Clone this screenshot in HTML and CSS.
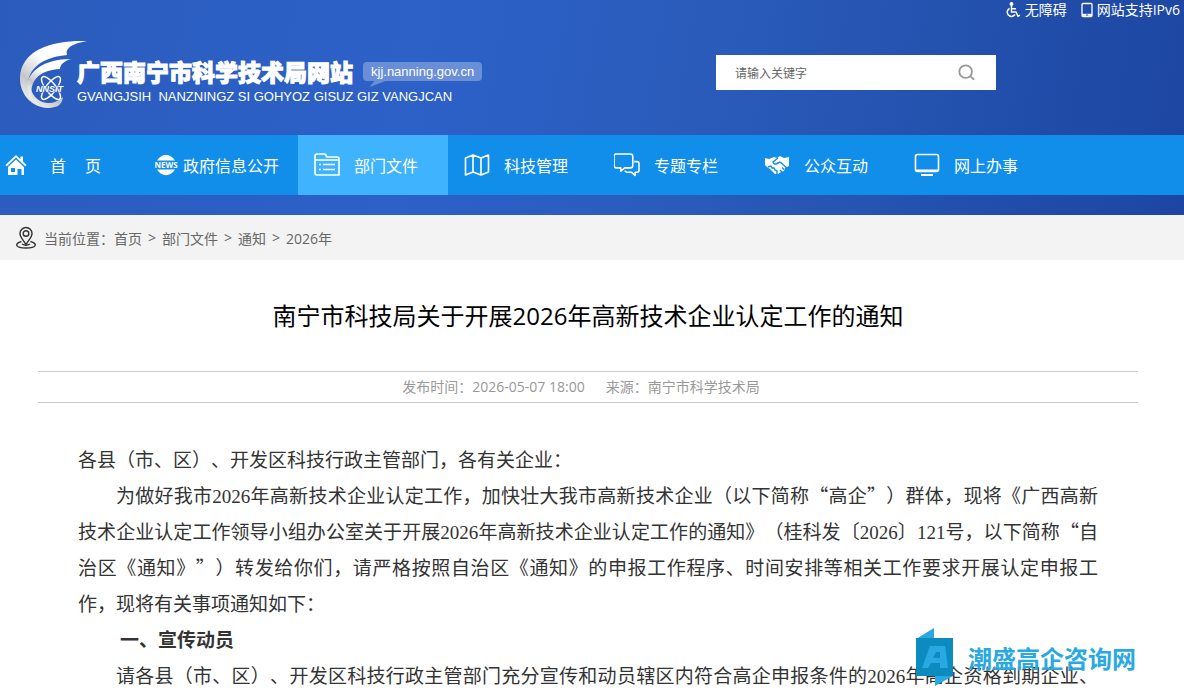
FILE: index.html
```html
<!DOCTYPE html>
<html lang="zh-CN">
<head>
  <meta charset="UTF-8" />
  <meta name="viewport" content="width=device-width, initial-scale=1.0"/>
  <title>南宁市科技局关于开展2026年高新技术企业认定工作的通知</title>
  <link rel="stylesheet" href="styles.css">
</head>
<body>
  <header class="header">
    <div class="topbar">
      <a href="#">
        <svg width="16" height="16" viewBox="0 0 16 16" fill="none" stroke="#fff" stroke-width="1.5">
          <circle cx="6.5" cy="2" r="1.2" fill="#fff"/>
          <path d="M6.5 4v6h4.500l2 4.200 2-1M7 6.700h4M4.500 6.500a4.200 4.200 0 1 0 5.500 6"/>
        </svg>
        <span>无障碍</span>
      </a>
      <a href="#">
        <svg width="12" height="16" viewBox="0 0 12 16" fill="none" stroke="#fff">
          <rect x="1" y="1.500" width="10" height="13" rx="1" stroke-width="1.300"/>
          <path d="M1 12.800h10" stroke-width="2"/>
          <path d="M5 13h2" stroke="#2250ae"/>
        </svg>
        <span>网站支持IPv6</span>
      </a>
    </div>

    <div class="banner">
      <a href="#" class="logo">
        <svg class="logo-mark" width="70" height="70" viewBox="0 0 70 70">
          <defs>
            <linearGradient id="silver" x1="0.7" y1="0.2" x2="0.2" y2="0.9">
              <stop offset="0.3" stop-color="#fff"/>
              <stop offset="0.75" stop-color="#c4c6ca"/>
              <stop offset="1" stop-color="#e9e9e9"/>
            </linearGradient>
          </defs>
          <path fill="url(#silver)" d="M68 1C34 0 2 9 1 38c0 17 12 29 27 30 8 0 13-2 15-7l1-4c-5 4-9 6-14 6-9 0-16-6-18-14l-3-1c-1-16 9-30 39-33-1-3 0-5 1-6 3-4 9-6 19-8z"/>
          <path fill="url(#silver)" d="M52 19C24 19 9 32 8 46l2 10 3 2C10 42 19 30 41 29c0-4 4-8 11-10z"/>
          <g fill="none" stroke="#fff" stroke-width="1.500">
            <ellipse cx="32" cy="48" rx="5" ry="14" transform="rotate(38 32 48)"/>
            <ellipse cx="32" cy="48" rx="5" ry="14" transform="rotate(-38 32 48)"/>
          </g>
          <text x="17" y="52" class="logo-code">NNSIT</text>
        </svg>
        <span class="logo-text">
          <span class="logo-row">
            <strong>广西南宁市科学技术局网站</strong>
            <span class="domain">kjj.nanning.gov.cn</span>
          </span>
          <span class="pinyin">GVANGJSIH&nbsp; NANZNINGZ SI GOHYOZ GISUZ GIZ VANGJCAN</span>
        </span>
      </a>

      <form class="search">
        <input type="text" placeholder="请输入关键字" aria-label="请输入关键字">
        <button type="button" aria-label="搜索">
          <svg width="18" height="18" viewBox="0 0 20 20" fill="none" stroke="#999" stroke-width="2">
            <circle cx="8.500" cy="8.500" r="7"/>
            <path d="M13.500 13.500l4.500 4"/>
          </svg>
        </button>
      </form>
    </div>

    <nav class="nav">
      <a href="#" class="home">
        <svg width="22" height="22" viewBox="0 0 22 22" fill="#fff">
          <path d="M11 1L0.500 11l1.300 1.200L11 3.600l9.200 8.600 1.300-1.200-3.500-3.400V2.500h-2.500v2.700z"/>
          <path d="M11 5.500L3 13v8h9.500v-6h4v6H19v-8zM6 14h4v4H6z" fill-rule="evenodd"/>
        </svg>
        <span>首</span><span>页</span>
      </a>
      <a href="#" class="news">
        <svg width="24" height="22" viewBox="0 0 24 22">
          <path fill="#fff" d="M3 6.500C7-1 17-1 21 6.500zM3 15.500c4.500 7.500 13.500 7.500 18 0z"/>
          <text x="12" y="14" class="news-text">NEWS</text>
        </svg>
        <span>政府信息公开</span>
      </a>
      <a href="#" class="active">
        <svg width="26" height="24" viewBox="0 0 26 24" fill="none" stroke="#fff" stroke-width="1.600">
          <path d="M1 21V3q0-2 2-2h7q2 0 2 1.500T14 4h9q2 0 2 2v16H3q-2 0-2-1M1 7h24"/>
          <path d="M9 11.500h12M9 16.500h12M5 11.500h2M5 16.500h2"/>
        </svg>
        <span>部门文件</span>
      </a>
      <a href="#">
        <svg width="26" height="24" viewBox="0 0 26 24" fill="none" stroke="#fff" stroke-width="1.600" stroke-linejoin="round">
          <path d="M1.500 5l7.500-3 8 3 7.500-3v17L17 22l-8-3-7.500 3zM9 2v17M17 5v17"/>
        </svg>
        <span>科技管理</span>
      </a>
      <a href="#">
        <svg width="26" height="24" viewBox="1 1 27 25" fill="none" stroke="#fff" stroke-width="1.600" stroke-linejoin="round">
          <path d="M3 2h15q2.500 0 2.500 2.500V14q0 2.500-2.500 2.500h-6L8 20v-3.500H3.500Q1 16.500 1 14V4.500Q1 2 3 2z"/>
          <path d="M22 10h3q2 0 2 2v7q0 2-2 2h-2v3.500L19 21h-5l-2-1.500"/>
        </svg>
        <span>专题专栏</span>
      </a>
      <a href="#">
        <svg width="26" height="22" viewBox="0 0 26 22">
          <path fill="#fff" d="M1 4l4 1 5-2 3 1 3-2 4 2 5-1v9l-4 2-1 3-3 1-3 2h-3l-5-5-3-2-2-2z"/>
          <path fill="none" stroke="#108eea" stroke-width="1.400" d="M14 4L9 8q1 3 4 1.500L16 8l7 6M4 13l3-1 1 2 2 0 1 2 2 1v3M16 16l2 2M18 13.500l2 2"/>
        </svg>
        <span>公众互动</span>
      </a>
      <a href="#">
        <svg width="26" height="24" viewBox="0 0 26 24" fill="none" stroke="#fff">
          <rect x="1.500" y="1.500" width="23" height="17" rx="2" stroke-width="1.600"/>
          <path d="M2 17.500h22M7 22h12" stroke-width="2"/>
        </svg>
        <span>网上办事</span>
      </a>
    </nav>
  </header>

  <div class="crumbs">
    <svg width="22" height="24" viewBox="0 0 22 24" fill="none" stroke="#333" stroke-width="1.400">
      <path d="M11 18.500C7.500 13 5 11 5 7.500a6 6 0 0 1 12 0c0 3.500-2.500 5.500-6 11z"/>
      <circle cx="11" cy="7.500" r="2.800"/>
      <path d="M6.500 15.500C-1 17.500 0 22 11 22s12-4.500 4.500-6.500M7 18q4 2.500 8 0"/>
    </svg>
    <span>当前位置：</span>
    <a href="#">首页</a>
    <span class="sep">&gt;</span>
    <a href="#">部门文件</a>
    <span class="sep">&gt;</span>
    <a href="#">通知</a>
    <span class="sep">&gt;</span>
    <a href="#">2026年</a>
  </div>

  <main class="article">
    <h1>南宁市科技局关于开展2026年高新技术企业认定工作的通知</h1>
    <div class="meta">
      <span>发布时间：2026-05-07 18:00</span>
      <span>来源：南宁市科学技术局</span>
    </div>
    <div class="content">
      <p>各县（市、区）、开发区科技行政主管部门，各有关企业：</p>
      <p class="indent">
        <span class="line">为做好我市<b>2026</b>年高新技术企业认定工作，加快壮大我市高新技术企业（以下简称“高企”）群体，现将《广西高新</span>
        <span class="line">技术企业认定工作领导小组办公室关于开展<b>2026</b>年高新技术企业认定工作的通知》（桂科发〔<b>2026</b>〕<b>121</b>号，以下简称“自</span>
        <span class="line">治区《通知》”）转发给你们，请严格按照自治区《通知》的申报工作程序、时间安排等相关工作要求开展认定申报工</span>
        <span class="line last">作，现将有关事项通知如下：</span>
      </p>
      <h2>一、宣传动员</h2>
      <p class="indent">
        <span class="line">请各县（市、区）、开发区科技行政主管部门充分宣传和动员辖区内符合高企申报条件的<b>2026</b>年高企资格到期企业、</span>
      </p>
    </div>
  </main>

  <div class="watermark">
    <svg width="38" height="58" viewBox="0 0 38 58">
      <path fill="#29a9e1" d="M0 11L18 0v11zM19 48h18L19 58z"/>
      <path fill="#0c8bc1" d="M0 10h37v38H0z"/>
      <path fill="#29a9e1" fill-rule="evenodd" d="M14 18h15l3 22h-8v-5h-9l-3 5H6zM20 24l-3 6h7v-6z"/>
    </svg>
    <span>潮盛高企咨询网</span>
  </div>
</body>
</html>
```
FILE: styles.css
```css
html, body {
  margin: 0;
  padding: 0;
}
body {
  position: relative;
  font-family: "Open Sans", "Noto Sans CJK SC", sans-serif;
  font-size: 14px;
  color: #333;
  background: #fff;
}
a {
  color: inherit;
  text-decoration: none;
}
svg {
  flex: none;
}
h1, h2, p {
  margin: 0;
  font-weight: normal;
}

.header {
  padding-bottom: 20px;
  background: linear-gradient(100deg, #2b5cbd 0%, #2d61c8 35%, #2a5bba 60%, #1c46a1 100%);
}
.topbar {
  display: flex;
  justify-content: flex-end;
  gap: 14px;
  height: 20px;
  padding-right: 4px;
  color: #fff;
}
.topbar a {
  display: flex;
  align-items: center;
  gap: 4px;
  line-height: 20px;
}
.banner {
  display: flex;
  justify-content: space-between;
  align-items: flex-start;
  height: 115px;
  padding: 0 188px 0 19px;
  box-sizing: border-box;
}
.logo {
  display: flex;
  padding-top: 20px;
  color: #fff;
}
.logo-code {
  font: italic bold 9px "Liberation Sans", sans-serif;
  fill: #fff;
  stroke: #2c5fc4;
  stroke-width: 1px;
  paint-order: stroke;
}
.logo-text {
  display: flex;
  flex-direction: column;
  margin-left: -12px;
  padding-top: 16px;
}
.logo-row {
  display: flex;
  align-items: center;
  gap: 10px;
  height: 30px;
}
.logo strong {
  font-family: "Noto Sans CJK SC", sans-serif;
  font-size: 23px;
  font-weight: 900;
  line-height: 30px;
  -webkit-text-stroke: 1px #fff;
}
.domain {
  position: relative;
  padding: 0 8px;
  border-radius: 4px;
  background: #6b8fd6;
  font: 13px/19px "Liberation Sans", sans-serif;
}
.domain::after {
  content: "";
  position: absolute;
  left: 9px;
  top: 19px;
  border-top: 6px solid #6b8fd6;
  border-right: 11px solid transparent;
  transform: skewX(-40deg);
}
.pinyin {
  font: 13px/22px "Liberation Sans", sans-serif;
}
.search {
  display: flex;
  width: 280px;
  height: 35px;
  margin-top: 35px;
  background: #fff;
}
.search input {
  flex: 1;
  min-width: 0;
  padding: 0 0 0 19px;
  border: 0;
  outline: 0;
  background: none;
  font: 12px "Noto Sans CJK SC", sans-serif;
}
.search input::placeholder {
  color: #666;
}
.search button {
  display: flex;
  align-items: center;
  justify-content: center;
  width: 58px;
  padding: 0;
  border: 0;
  background: none;
  cursor: pointer;
}

.nav {
  display: flex;
  height: 60px;
  background: #108eea;
  color: #fff;
  font-size: 16px;
}
.nav a {
  display: flex;
  align-items: center;
  gap: 14px;
  width: 150px;
  padding-left: 16px;
  box-sizing: border-box;
}
.nav a:hover, .nav .active {
  background: #40b3ff;
}
.nav .home {
  gap: 19px;
  width: 148px;
  padding-left: 5px;
}
.nav .home svg {
  margin-right: 4px;
}
.nav .news {
  gap: 5px;
  padding-left: 6px;
}
.news-text {
  font: bold 8px "Open Sans", sans-serif;
  fill: #fff;
  text-anchor: middle;
}

.crumbs {
  display: flex;
  align-items: center;
  height: 45px;
  padding-left: 15px;
  background: #f3f3f3;
  color: #666;
}
.crumbs svg {
  margin-right: 7px;
}
.crumbs .sep {
  padding: 0 6px;
}

.article {
  padding: 36px 46px 0 38px;
}
.article h1 {
  font-size: 24px;
  line-height: 40px;
  text-align: center;
  color: #000;
}
.meta {
  display: flex;
  justify-content: center;
  gap: 21px;
  margin-top: 35px;
  padding-right: 14px;
  border-top: 1px solid #ccc;
  border-bottom: 1px solid #ccc;
  line-height: 30px;
  color: #999;
}
.content {
  padding: 38px 40px 0;
  font-family: "Noto Sans CJK SC", sans-serif;
  font-size: 19px;
  line-height: 36px;
  text-spacing-trim: space-all;
}
.content b {
  font-family: "Liberation Serif", serif;
  font-weight: normal;
  line-height: 1;
}
.line {
  display: block;
  text-align: justify;
  text-align-last: justify;
  white-space: nowrap;
}
.line.last {
  text-align-last: left;
}
.indent .line:first-child {
  padding-left: 38px;
}
.content h2 {
  padding-left: 42px;
  font-size: 19px;
  font-weight: bold;
}

.watermark {
  position: absolute;
  top: 628px;
  right: 48px;
  display: flex;
  align-items: center;
  gap: 14px;
  color: #29a9e1;
  font-family: "Noto Sans CJK SC", sans-serif;
  font-size: 24px;
  font-weight: bold;
}
```
